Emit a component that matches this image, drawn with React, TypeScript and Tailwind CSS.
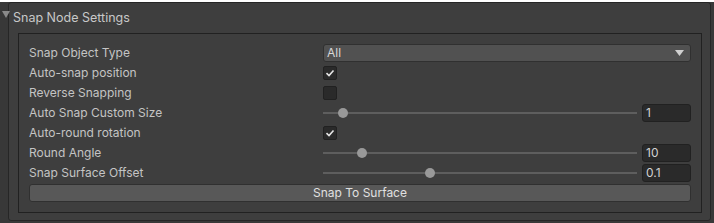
import React from 'react'

function Check({ on }: { on: boolean }) {
  return (
    <div className="flex h-[14px] w-[14px] items-center justify-center rounded-[2px] border border-[#212121] bg-[#2a2a2a]">
      {on && (
        <svg width="10" height="10" viewBox="0 0 10 10">
          <path d="M1.5 5.2 L4 7.5 L8.5 2.5" fill="none" stroke="#e4e4e4" strokeWidth="1.6" />
        </svg>
      )}
    </div>
  )
}

function Slider({ pos, value }: { pos: number; value: string }) {
  return (
    <div className="flex flex-1 items-center gap-[5px]">
      <div className="relative h-[18px] flex-1">
        <div className="absolute left-0 right-0 top-[8px] h-[2px] bg-[#5e5e5e]" />
        <div
          className="absolute top-[4px] h-[10px] w-[10px] rounded-full bg-[#999999]"
          style={{ left: pos - 5 }}
        />
      </div>
      <div className="flex h-[18px] w-[49px] items-center rounded-[3px] border border-[#212121] bg-[#2a2a2a] pl-[3px] text-[#d2d2d2]">
        {value}
      </div>
    </div>
  )
}

function Row({ label, children }: { label: string; children: React.ReactNode }) {
  return (
    <div className="flex h-[20px] items-center">
      <div className="w-[294px] shrink-0 text-[#c4c4c4]">{label}</div>
      <div className="flex flex-1 items-center">{children}</div>
    </div>
  )
}

export default function App() {
  return (
    <div
      className="h-[223px] w-[714px] bg-[#383838] text-[12px] leading-none"
      style={{ fontFamily: 'Inter, "Noto Sans", sans-serif' }}
    >
      <div className="relative ml-[8px] mt-[2px] h-[219px] w-[703px] rounded-[3px] border border-[#262626] bg-[#3e3e3e] pl-[9px] pr-[8px]">
        <svg className="absolute left-[-7px] top-[8px]" width="8" height="7" viewBox="0 0 8 7">
          <path d="M0 0 L8 0 L4 7 Z" fill="#8a8a8a" />
        </svg>
        <div className="-ml-[5px] flex h-[30px] items-center text-[12.5px] text-[#c8c8c8]">
          Snap Node Settings
        </div>
        <div className="h-[180px] border border-[#212121] px-[10px] pt-[9px]">
          <Row label="Snap Object Type">
            <div className="flex h-[18px] w-[368px] items-center justify-between rounded-[3px] border border-[#303030] bg-[#515151] pl-[3px] pr-[6px] text-[#d8d8d8]">
              <span>All</span>
              <svg width="9" height="6" viewBox="0 0 9 6">
                <path d="M0 0 L9 0 L4.5 6 Z" fill="#d0d0d0" />
              </svg>
            </div>
          </Row>
          <Row label="Auto-snap position">
            <Check on />
          </Row>
          <Row label="Reverse Snapping">
            <Check on={false} />
          </Row>
          <Row label="Auto Snap Custom Size">
            <Slider pos={20} value="1" />
          </Row>
          <Row label="Auto-round rotation">
            <Check on />
          </Row>
          <Row label="Round Angle">
            <Slider pos={39} value="10" />
          </Row>
          <Row label="Snap Surface Offset">
            <Slider pos={107} value="0.1" />
          </Row>
          <div className="mt-[1px] flex h-[18px] items-center justify-center rounded-[3px] border border-[#303030] bg-[#585858] text-[#e0e0e0]">
            Snap To Surface
          </div>
        </div>
      </div>
    </div>
  )
}
